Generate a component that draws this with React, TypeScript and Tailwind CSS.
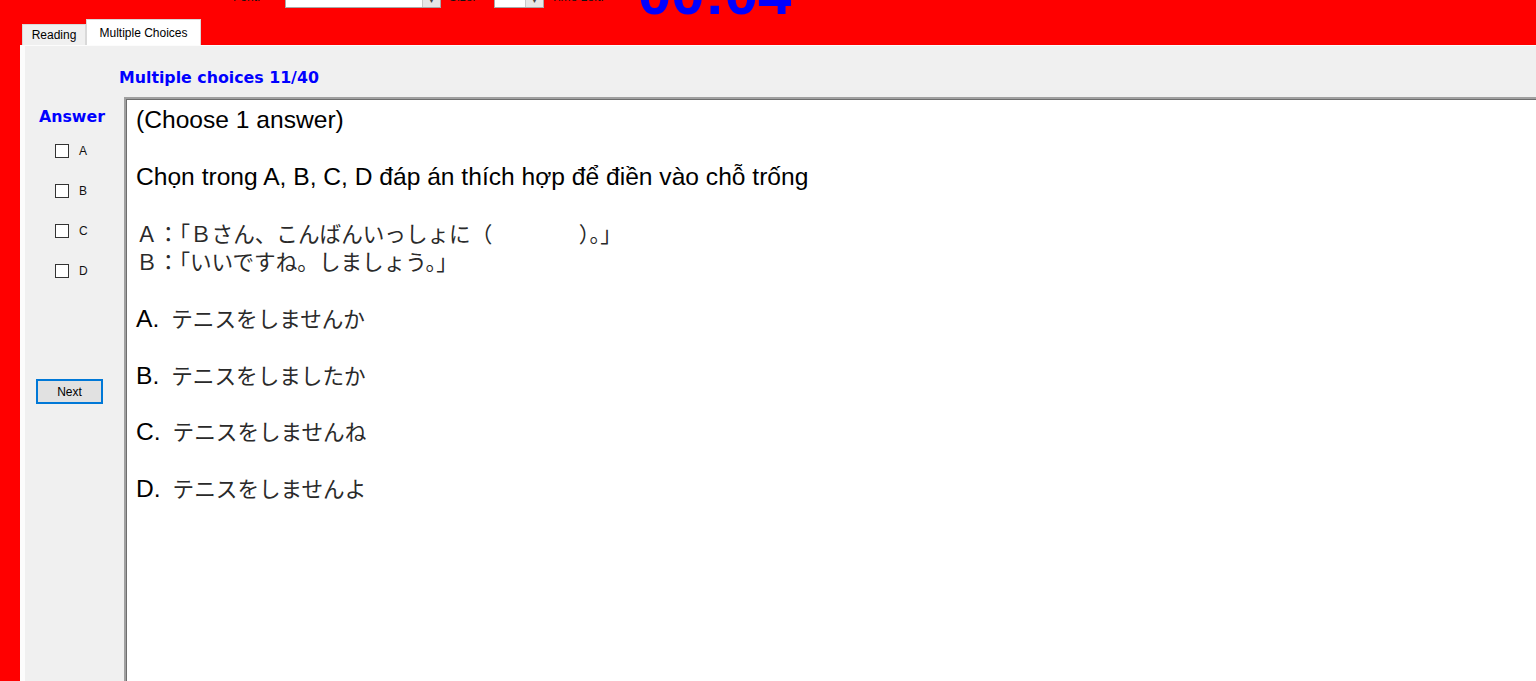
import React from 'react';

const jp = "font-['Noto_Sans_CJK_JP',sans-serif] text-[21.6px] text-[#2a2a2a]";

type Line = { label?: string; jp?: string; text?: string };

const lines: Line[] = [
  { text: '(Choose 1 answer)' },
  {},
  { text: 'Chọn trong A, B, C, D đáp án thích hợp để điền vào chỗ trống' },
  {},
  { jp: 'Ａ：「Ｂさん、こんばんいっしょに（　　　　）。」' },
  { jp: 'Ｂ：「いいですね。しましょう。」' },
  {},
  { label: 'A.', jp: 'テニスをしませんか' },
  {},
  { label: 'B.', jp: 'テニスをしましたか' },
  {},
  { label: 'C.', jp: 'テニスをしませんね' },
  {},
  { label: 'D.', jp: 'テニスをしませんよ' },
];

function ComboBox({ width }: { width: string }) {
  return (
    <div className={`${width} h-[21px] mt-[-13px] bg-white border border-[#a8a8a8] flex justify-end`}>
      <div className="w-[18px] h-full bg-[#e6e6e6] border-l border-[#c8c8c8] flex items-end justify-center pb-[3px]">
        <span className="text-[7px] leading-none text-[#444]">▼</span>
      </div>
    </div>
  );
}

function TopBar() {
  return (
    <div className="h-[19px] overflow-hidden flex items-start font-['Liberation_Sans',sans-serif] text-[12px] leading-[15px] text-[#111]">
      <div className="ml-[233px] w-[52px] mt-[-10px]">Font:</div>
      <ComboBox width="w-[156px]" />
      <div className="ml-[8px] w-[45px] mt-[-10px]">Size:</div>
      <ComboBox width="w-[50px]" />
      <div className="ml-[7px] w-[87px] mt-[-10px]">Time Left:</div>
      <div className="mt-[-36px] text-[60px] leading-[60px] font-bold text-[#0000ff]">00:04</div>
    </div>
  );
}

function Tabs() {
  return (
    <div className="h-[26px] flex items-end pl-[22px] font-['Liberation_Sans',sans-serif] text-[12px] text-black">
      <div className="w-[64px] h-[21px] bg-[#f0f0f0] border border-b-0 border-[#d9d9d9] flex items-center justify-center">
        Reading
      </div>
      <div className="w-[115px] h-[26px] bg-white border border-b-0 border-[#d9d9d9] flex justify-center pt-[4px]">
        Multiple Choices
      </div>
    </div>
  );
}

function AnswerColumn() {
  return (
    <div className="w-[99px] shrink-0 flex flex-col">
      <div className="mt-[10px] pl-[14px] h-[20px] font-['DejaVu_Sans',sans-serif] font-bold text-[15.8px] leading-[20px] text-[#0000ff]">
        Answer
      </div>
      <div className="mt-[4px] flex flex-col">
        {['A', 'B', 'C', 'D'].map((k) => (
          <div key={k} className="h-[40px] flex items-center pl-[30px]">
            <div className="w-[14px] h-[14px] bg-white border border-[#333]" />
            <span className="ml-[10px] font-['Liberation_Sans',sans-serif] text-[12px] text-[#111]">{k}</span>
          </div>
        ))}
      </div>
      <button className="mt-[88px] ml-[11px] w-[67px] h-[25px] bg-[#e1e1e1] border-2 border-[#0078d7] font-['Liberation_Sans',sans-serif] text-[12px] text-black">
        Next
      </button>
    </div>
  );
}

function QuestionBox() {
  return (
    <div className="flex-1 bg-white border-t-2 border-l-2 border-[#a0a0a0] shadow-[inset_1px_1px_0_#6e6e6e] pl-[10px] pt-[7px] font-['Liberation_Sans','Noto_Sans_CJK_JP',sans-serif] text-[24.6px] leading-[28.3px] text-black">
      {lines.map((l, i) => (
        <div key={i} className="h-[28.3px] whitespace-nowrap">
          {l.text}
          {l.label && <span>{l.label}</span>}
          {l.jp && <span className={`${jp} ${l.label ? 'ml-[12px]' : ''}`}>{l.jp}</span>}
        </div>
      ))}
    </div>
  );
}

export default function App() {
  return (
    <div className="h-screen w-full overflow-hidden bg-[#ff0000] flex flex-col">
      <TopBar />
      <Tabs />
      <div className="flex-1 ml-[20px] bg-[#fcfcfc] pl-[5px] pt-[1px] flex flex-col">
        <div className="flex-1 bg-[#f0f0f0] flex flex-col">
          <div className="h-[51px] shrink-0 pl-[94px] pt-[22px] font-['DejaVu_Sans',sans-serif] font-bold text-[15.8px] leading-[20px] text-[#0000ff]">
            Multiple choices 11/40
          </div>
          <div className="flex-1 flex">
            <AnswerColumn />
            <QuestionBox />
          </div>
        </div>
      </div>
    </div>
  );
}
